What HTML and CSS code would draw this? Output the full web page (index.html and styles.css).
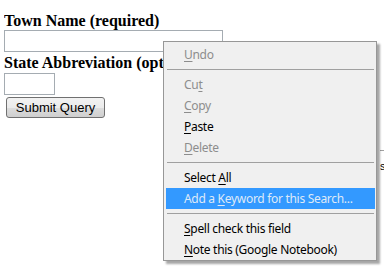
FILE: index.html
```html
<!DOCTYPE html>
<html lang="en">
<head>
    <meta charset="UTF-8">
    <title>Town search</title>
    <link rel="stylesheet" href="styles.css">
</head>
<body>
    <form class="townForm">
        <label class="fieldLabel" for="town">Town Name (required)</label>
        <input class="textBox townBox" type="text" id="town">
        <label class="fieldLabel" for="state">State Abbreviation (optional)</label>
        <input class="textBox stateBox" type="text" id="state">
        <button class="submitBtn" type="button">Submit Query</button>
    </form>
    <div class="behindPanel"><span class="dark">s</span><span class="blue">V</span></div>

    <!-- context menu over the town field -->
    <ul class="contextMenu">
        <li class="item disabled"><u>U</u>ndo</li>
        <li class="sep"></li>
        <li class="item disabled">Cu<u>t</u></li>
        <li class="item disabled"><u>C</u>opy</li>
        <li class="item"><u>P</u>aste</li>
        <li class="item disabled"><u>D</u>elete</li>
        <li class="sep"></li>
        <li class="item">Select <u>A</u>ll</li>
        <li class="item active">Add a <u>K</u>eyword for this Search...</li>
        <li class="sep"></li>
        <li class="item"><u>S</u>pell check this field</li>
        <li class="item"><u>N</u>ote this (Google Notebook)</li>
    </ul>
</body>
</html>
```

FILE: styles.css
```css
body {
    margin: 11px 4px 0;
    background: #fff;
    font-family: "Liberation Serif", serif;
}
.townForm {
    display: flex;
    flex-direction: column;
    align-items: flex-start;
}
.fieldLabel {
    font-size: 16px;
    font-weight: bold;
    line-height: 19px;
    white-space: nowrap;
}
.textBox {
    box-sizing: border-box;
    height: 22px;
    margin: 0;
    border: 1px solid #a5acb2;
    background: #fff;
}
.townBox {
    width: 219px;
    margin-bottom: 1px;
}
.stateBox {
    width: 51px;
    margin-top: 1px;
}
.submitBtn {
    box-sizing: border-box;
    width: 99px;
    height: 21px;
    margin: 2px 0 0 2px;
    padding: 0;
    font-family: "Liberation Sans", sans-serif;
    font-size: 13px;
    color: #000;
    border: 1px solid #707070;
    border-radius: 3px;
    background: linear-gradient(#f2f2f2 0%, #ebebeb 50%, #dddddd 51%, #cfcfcf 100%);
}
.behindPanel {
    margin: 32px 0 0 376px;
    border-top: 1px solid #a0a0a0;
    padding-top: 9px;
    font-family: "Liberation Sans", sans-serif;
    font-size: 11px;
    line-height: 12px;
    white-space: nowrap;
}
.blue {
    color: #1f5fbf;
}
.contextMenu {
    position: absolute;
    left: 163px;
    top: 41px;
    width: 214px;
    box-sizing: border-box;
    margin: 0;
    padding: 2px 0 0;
    list-style: none;
    background: #f0f0f0;
    border: 1px solid #979797;
    box-shadow: 3px 3px 2px rgba(0, 0, 0, 0.35);
    font-family: "Noto Sans", sans-serif;
    font-size: 12px;
    letter-spacing: -0.3px;
    color: #000;
}
.item {
    height: 21px;
    line-height: 21px;
    margin: 0 1px 0 2px;
    padding-left: 18px;
    white-space: nowrap;
}
.disabled {
    color: #8d8d8d;
}
.active {
    background: #3399ff;
    color: #dfe9f8;
}
.sep {
    height: 1px;
    margin: 4px 2px 4px 3px;
    background: #a0a0a0;
}
u {
    text-underline-offset: 2px;
}
```
